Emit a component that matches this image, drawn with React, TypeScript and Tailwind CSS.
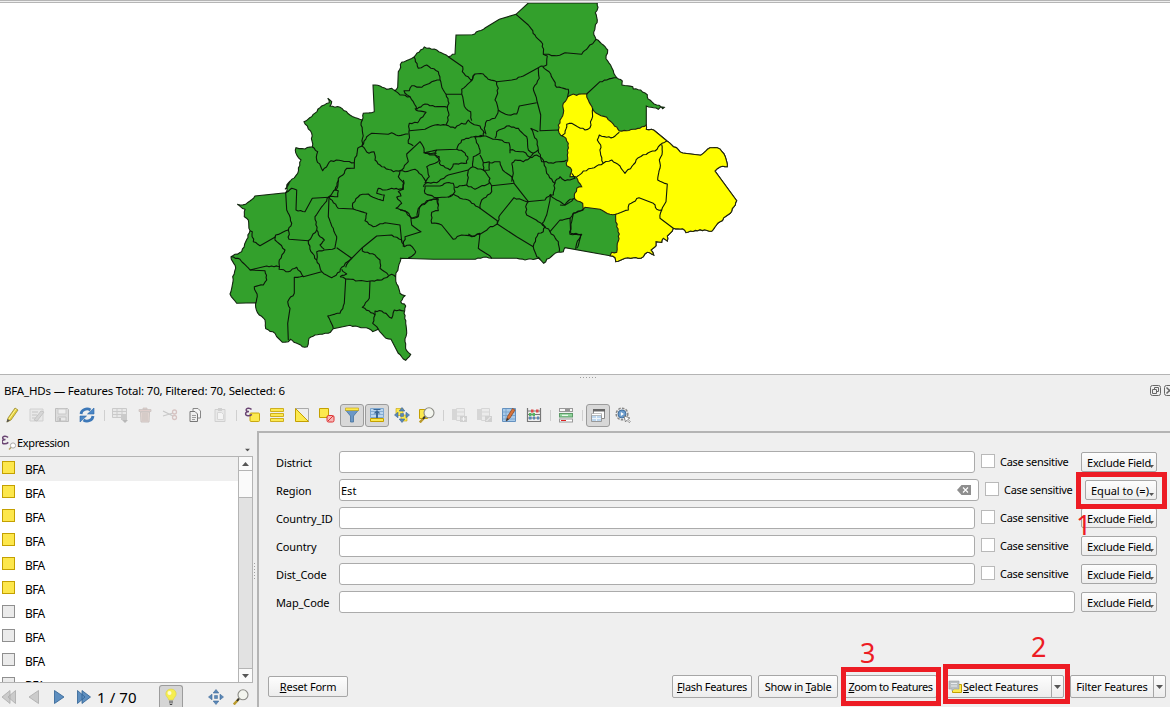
import React from "react";

type Seg = [number, number, string];
type Pt = [number, number];

function points(segs: Seg[]): Pt[] {
  const out: Pt[] = [];
  for (const [ox, oy, s] of segs)
    for (const p of s.trim().split(/\s+/)) {
      const [x, y] = p.split(",").map(Number);
      out.push([ox + x / 3, oy + y / 3]);
    }
  return out;
}

/* Gives short border segments a natural, slightly irregular course. */
function border(segs: Seg[], closed = false): string {
  const p = points(segs);
  if (closed) p.push(p[0]);
  let d = `M${p[0][0].toFixed(1)} ${p[0][1].toFixed(1)}`;
  for (let i = 1; i < p.length; i++) {
    const [a, b] = p[i - 1];
    const [x, y] = p[i];
    const len = Math.hypot(x - a, y - b);
    if (len > 4 && len < 15) {
      const n = Math.round(len / 2.6);
      for (let k = 1; k < n; k++) {
        const h = Math.sin((a + x) * 12.99 + (b + y) * 78.23 + k * 37.7) * 4375.5;
        const r = (h - Math.floor(h) - 0.5) * 1.5;
        const mx = a + ((x - a) * k) / n - ((y - b) / len) * r;
        const my = b + ((y - b) * k) / n + ((x - a) / len) * r;
        d += `L${mx.toFixed(1)} ${my.toFixed(1)}`;
      }
    }
    d += `L${x.toFixed(1)} ${y.toFixed(1)}`;
  }
  return closed ? d + "Z" : d;
}

const COUNTRY: Seg[] = [
  [440, 0, "265,9 472,9 474,22 466,38 472,60 461,96 468,118 490,135 503,150 498,176 512,196 520,212 530,233 547,243 546,255 578,260 580,267 602,270 622,284 624,297 650,315 663,320 673,322 668,326 663,320 655,328 619,318 619,388 642,391 681,423 715,449"],
  [560, 80, "368,219 422,226 450,203 472,203 486,215 496,230 502,260 480,261 465,273 530,362 522,380 511,400 480,425 455,454 420,449 378,458 368,446 340,445 330,460 322,468 322,483 310,475 305,487 288,485 288,497 273,510 281,525 262,517 243,535 220,533 195,535 167,545 165,533 150,527 15,503"],
  [400, 100, "495,443 490,455 475,456 440,478 431,490 420,478 415,475 375,480 350,475 275,475 250,472 218,478 100,478 0,475"],
  [225, 180, "528,236 520,262 512,288 515,312 525,340 540,347 527,365 542,378 537,400 542,430 545,460 540,485 545,512 557,523 542,541 520,520 498,478 483,475 460,448 443,455 432,446 400,440 375,436 325,446 310,460 292,463 270,465 252,475 247,500 232,500 207,487 197,478 190,485 172,487 155,470 150,460 122,446 120,420 103,405 92,382 92,368 35,370 15,342 22,315 23,290 32,265 18,230 50,215 62,185 75,152 70,120 58,110 60,88 37,73 62,73 90,48 182,38 190,15 195,3"],
  [225, 0, "180,568 195,545 218,520 228,480 212,458 213,443 240,447 262,440 260,400 237,365 260,350 290,318 313,308 308,295 320,305 315,318 345,322 375,345 412,360 415,340 448,335 444,255 465,258 485,268 500,265 510,272 518,262 520,215 530,187 567,171 598,141 635,150 670,170 690,162 693,105 742,104 780,84"],
  [440, 0, "178,58 228,43"],
];

const EAST: Seg[] = [
  [440, 0, "383,290 400,282 410,286 425,282 440,282 445,300 458,328 475,343 500,352 520,372 538,393 560,392 580,388 600,385 619,375 619,388 642,391 681,423 715,449"],
  [560, 80, "368,219 422,226 450,203 472,203 486,215 496,230 502,260 480,261 465,273 530,362 522,380 511,400 480,425 455,454 420,449 378,458 368,446 340,445 330,460 322,468 322,483 310,475 305,487 288,485 288,497 273,510 281,525 262,517 243,535 220,533 195,535 167,545 165,533 150,527 155,517 170,517 172,490 178,462 170,440 167,403 150,403 120,388 75,382 70,388 68,370 45,358 43,350 50,325 65,320 48,290 30,290 35,270 20,257 22,225 25,190 18,175 2,166"],
  [440, 0, "357,398 355,375 370,340 370,310"],
];

const LINES: Seg[] = [
  [225, 0, "412,360 408,375 413,400 411,438 425,410 440,400 490,403 500,398 520,407 550,402"],
  [225, 0, "262,440 278,455 275,480 293,512 318,482 350,482 388,488 398,445 411,438"],
  [225, 0, "388,488 388,505 365,505 358,520 340,535 330,570 340,572 338,590 312,590"],
  [225, 0, "411,438 432,460 447,455 450,480 470,500 505,515 530,510 550,485 545,462 585,425 595,440 600,460 635,460"],
  [225, 0, "567,171 580,205 605,195 640,215 645,238 655,270 663,283 672,310 667,322 672,345 663,375"],
  [225, 0, "645,240 620,245 590,262 560,257 553,272 537,272 540,280 555,290 525,285 508,270"],
  [225, 0, "555,290 565,305 575,328 600,312 630,320 667,322"],
  [225, 0, "570,325 580,333 603,337 578,368 553,370 553,388 550,430 565,437"],
  [225, 0, "553,392 600,388 630,375 663,375 690,385 710,370 722,372 730,360 740,370 765,378 778,400"],
  [225, 0, "670,170 713,200 712,215 740,242 710,268 710,283 663,283"],
  [225, 0, "740,242 750,222"],
  [225, 0, "710,283 722,325 737,335 740,362"],
  [225, 0, "525,512 540,515 570,508 590,525 603,550 595,560"],
  [225, 0, "525,512 520,530 537,550 532,568 535,568"],
  [440, 0, "228,43 265,75 285,105 308,132 310,163 322,168 320,195 295,203 250,228 215,240 170,245 145,238 130,222 105,222 92,242"],
  [440, 0, "310,163 350,167 375,158 425,163 440,148 468,118"],
  [440, 0, "440,282 480,245 500,240 530,233"],
  [440, 0, "308,200 332,222 350,262 385,268 383,292"],
  [440, 0, "295,203 298,235 280,265 290,300 302,345 300,392 357,390"],
  [440, 0, "170,245 175,265 165,300 175,330 205,345 230,342 238,318 290,308"],
  [440, 0, "175,330 165,355 140,362 133,385 138,403"],
  [560, 80, "98,85 95,118 90,143 75,150 35,130 20,133 15,160 5,168"],
  [560, 80, "178,157 160,172 140,172 118,165 112,180 122,195 122,225 130,250"],
  [560, 80, "50,290 70,273 95,265 130,250 155,240 180,258 195,280 215,260 235,233 265,218 285,213 300,195 320,183"],
  [560, 80, "305,193 307,215 298,240 300,265 293,300 322,312 318,365 305,390"],
  [560, 80, "167,403 205,390 207,373 237,353 280,370 290,388 305,390 300,415 340,445"],
  [560, 80, "70,388 40,400 35,425 30,463 62,465 50,490 47,508"],
  [560, 80, "0,375 15,375 30,358 45,355"],
  [225, 180, "182,38 185,90 193,105 200,130 190,150 192,178 250,182 275,150 270,110 295,75 312,50"],
  [225, 180, "182,38 200,25 215,30 213,90 240,95 262,55 312,52"],
  [225, 180, "340,0 338,20 312,50 340,85 385,87 383,70 405,45 430,42 452,55 475,62 478,45 455,40 460,25 480,30 500,25 535,28"],
  [225, 180, "535,0 535,28 520,35 528,48 515,52"],
  [225, 180, "385,87 425,100 420,122 445,140 480,128 525,135 530,185"],
  [225, 180, "312,52 310,110 325,145 335,170 330,205 298,210 275,215 275,240"],
  [225, 180, "250,182 258,215 275,240 290,275"],
  [225, 180, "275,150 285,170 298,180 285,195 298,208"],
  [225, 180, "290,275 235,290 215,262 190,275 162,268 163,240 180,210 150,180 152,165 190,150"],
  [225, 180, "152,170 105,197 85,185 82,155 75,152"],
  [225, 180, "18,230 45,238 75,270 125,258 162,260"],
  [225, 180, "75,270 120,272 125,300 115,315 88,320 97,350 92,370"],
  [225, 180, "235,288 208,292 208,340 188,365 195,385 188,430 190,480"],
  [225, 180, "290,275 320,293 345,275 350,262 380,235 335,203"],
  [225, 180, "345,290 365,282 350,268"],
  [225, 180, "345,290 362,297 400,302 435,303 470,300 500,283 512,290"],
  [225, 180, "362,297 358,370 345,400 308,408 325,446"],
  [225, 180, "435,303 433,355 412,382 450,405 443,430 460,448"],
  [225, 180, "450,405 450,393 470,393 500,415 508,390 537,393"],
  [225, 180, "362,262 375,240 412,203 412,213 450,225 465,240 465,265 490,285"],
  [225, 180, "412,203 455,168 500,165 530,180 538,200 555,195 572,215 565,225 550,233"],
  [225, 180, "515,50 530,70 513,85 540,92 558,115 560,135 588,155 540,170 535,200"],
  [225, 180, "558,115 577,112 580,85 605,62 640,57 640,92 620,97 620,130 650,135 685,178 710,165 740,170 765,160 760,205 795,228 800,235"],
  [400, 100, "70,158 110,150 170,148 185,120 220,110 250,108 225,112 235,135 240,160 220,170 218,200"],
  [400, 100, "250,108 253,95"],
  [400, 100, "110,150 105,165 118,170 118,190 150,210 160,192 200,190 203,170 190,155 170,148"],
  [400, 100, "75,160 105,165 118,180 105,190 80,200 88,230 75,248 110,248 145,225 205,210"],
  [400, 100, "75,258 120,258 140,248 160,250 165,275 150,290 110,293 75,280 75,258"],
  [400, 100, "205,210 203,240 200,255 225,268 240,260 268,250 270,235 250,210 218,200 205,210"],
  [400, 100, "250,188 268,185 268,210 250,210 250,188 240,165"],
  [400, 100, "268,188 300,185 308,210 335,230 342,250 275,257 268,245"],
  [400, 100, "165,262 200,255"],
  [400, 100, "145,292 160,283 180,295 205,300 240,325 292,362 292,372"],
  [400, 100, "240,325 245,300 275,275 275,257"],
  [400, 100, "240,403 265,385 292,372 300,345 342,293 380,305 435,300 452,282"],
  [400, 100, "240,403 215,408 205,402"],
  [400, 100, "342,250 385,305"],
  [400, 100, "292,372 350,410 400,440"],
  [400, 100, "400,440 415,400 430,395 435,380 415,365 380,345 377,320 385,305"],
  [400, 100, "400,440 410,470 420,478"],
  [400, 100, "427,370 440,345 450,300 452,285"],
  [400, 100, "427,370 450,395 475,425 478,455"],
  [400, 100, "450,395 480,360 510,355 512,400 545,403 530,445"],
  [400, 100, "335,190 345,180 370,185 410,165 430,180 440,220 465,250 460,285 452,285"],
  [400, 100, "335,190 340,220 335,245"],
  [400, 100, "285,115 290,95 320,78 355,85 380,110 385,150 400,160 390,172 370,155 330,150 327,128 285,118 250,108"],
  [400, 100, "400,160 415,150 425,185 460,190 500,180"],
  [400, 100, "330,150 330,160"],
  [400, 100, "392,85 400,100 412,125 415,150"],
  [400, 100, "392,85 415,95"],
  [400, 100, "465,250 470,238 480,230 495,242 510,240 525,235 515,220"],
  [400, 100, "452,285 470,300 495,315 520,297"],
  [400, 100, "510,355 520,340 550,330"],
  [400, 100, "0,330 20,335 35,355 55,350 60,320 90,300 115,293"],
  [400, 100, "110,293 115,315"],
];

function CountryMap() {
  return (
    <svg width="1170" height="371" viewBox="0 3 1170 371" className="block">
      <path d={border(COUNTRY, true)} fill="#33a02c" stroke="#12250f" strokeWidth="1.1" />
      <path d={border(EAST, true)} fill="#ffff00" stroke="#232310" strokeWidth="1.1" />
      <g fill="none" stroke="#0c160a" strokeWidth="1.1" strokeLinejoin="round">
        {LINES.map((l, i) => (
          <path key={i} d={border([l])} />
        ))}
      </g>
    </svg>
  );
}

function Svg({ children, faded }: { children: React.ReactNode; faded?: boolean }) {
  return (
    <svg width="16" height="16" viewBox="0 0 16 16" className={faded ? "opacity-35 grayscale" : ""}>
      {children}
    </svg>
  );
}

const Y = "#fce94f";
const YS = "#c4a000";
const BL = "#5b88b8";

const Pencil = () => (
  <Svg>
    <path d="M3 15l1-4 7-10 3 2-7 10z" fill="#e3cf3a" stroke="#9a8b35" strokeWidth=".8" />
    <path d="M5 12l7-10" stroke="#fff6a0" />
    <path d="M2.5 15.5l1-3.5 2.500 1.500z" fill="#555" />
  </Svg>
);
const MultiEdit = () => (
  <Svg faded>
    <path d="M1 2h13v12H1z" fill="#ddd" stroke="#999" />
    <path d="M3 5h6M3 8h5M3 11h4" stroke="#777" />
    <path d="M5 13l7-9 3 1-7 9z" fill="#aaa" stroke="#777" />
  </Svg>
);
const Save = () => (
  <Svg faded>
    <path d="M1.500 1.500h12l1 1v12h-13z" fill="#bbb" stroke="#666" />
    <path d="M4 2h8v5H4z" fill="#eee" stroke="#888" />
    <path d="M4 10h8v4H4z" fill="#ddd" stroke="#777" />
    <path d="M5 11h2v3H5z" fill="#666" />
  </Svg>
);
const Reload = () => (
  <Svg>
    <path d="M2 7a6 5.500 0 0 1 9.500-4" fill="none" stroke="#3d78b8" strokeWidth="2.800" />
    <path d="M15 1v6H8.500z" fill="#4a86c6" stroke="#2c66a5" strokeWidth=".6" />
    <path d="M14 9a6 5.500 0 0 1-9.500 4" fill="none" stroke="#3d78b8" strokeWidth="2.800" />
    <path d="M1 15V9h6.500z" fill="#4a86c6" stroke="#2c66a5" strokeWidth=".6" />
  </Svg>
);
const AddRow = () => (
  <Svg faded>
    <path d="M.5 1.500h14v9H.5zM.5 4.500h14M.5 7.500h14M5 1.500v9M10 1.500v9" fill="#ddd" stroke="#888" />
    <path d="M9 8h6v5h-6z" fill="#888" />
    <path d="M10 13h6l-3 3z" fill="#555" />
  </Svg>
);
const Trash = () => (
  <svg width="16" height="16" viewBox="0 0 16 16" className="opacity-45">
    <path d="M3.500 5h9l-.5 10H4z" fill="#d9bcb4" stroke="#a08f8a" />
    <path d="M2 2.500h12v2H2zM6 1h4v1.500H6z" fill="#cfaaa2" stroke="#a08f8a" strokeWidth=".8" />
    <path d="M6 6v8M8 6v8M10 6v8" stroke="#9a8782" />
  </svg>
);
const Cut = () => (
  <svg width="16" height="16" viewBox="0 0 16 16" className="opacity-45">
    <path d="M1 4l10 5M1 9l10-3" stroke="#999" strokeWidth="1.300" />
    <circle cx="12.500" cy="5" r="2" fill="none" stroke="#b9908c" strokeWidth="1.300" />
    <circle cx="12.500" cy="10.500" r="2" fill="none" stroke="#b9908c" strokeWidth="1.300" />
  </svg>
);
const Copy = () => (
  <Svg>
    <path d="M6 1.500h5l2.500 2.500v7H6z" fill="#f4f4f4" stroke="#888" />
    <path d="M3 4.500h5L10.500 7v7.500H3z" fill="#eee" stroke="#777" />
    <path d="M5 8.500h4M5 10.500h4M5 12.500h3" stroke="#888" strokeWidth=".8" />
  </Svg>
);
const Paste = () => (
  <Svg faded>
    <path d="M3 2.500h10v12H3z" fill="#ddd" stroke="#999" />
    <path d="M6 1h4v3H6z" fill="#999" />
    <path d="M5.500 5.500h4l2 2v5h-6z" fill="#fff" stroke="#aaa" />
  </Svg>
);
const Epsilon = () => (
  <path d="M7.500 2.500C6 .5 2 .8 2.200 3c.1 1.300 1.400 1.600 2.800 1.600C3 4.600 1.500 5.400 1.600 7c.2 2.300 4.200 2.400 6.200.4" fill="none" stroke="#6a4573" strokeWidth="1.500" />
);
const SelectExpr = () => (
  <Svg>
    <rect x="6" y="6" width="9.500" height="8.500" rx="1" fill={Y} stroke={YS} strokeWidth=".9" />
    <Epsilon />
  </Svg>
);
const SelectAll = () => (
  <Svg>
    <g fill={Y} stroke={YS} strokeWidth=".8">
      <path d="M1.500 1.500h13v3h-13zM1.500 6.500h13v3h-13zM1.500 11.500h13v3h-13z" />
    </g>
  </Svg>
);
const Invert = () => (
  <Svg>
    <path d="M1.500 1.500h13v13z" fill="#eee" stroke="#aaa" />
    <path d="M1.500 1.500v13h13z" fill={Y} stroke={YS} />
  </Svg>
);
const Deselect = () => (
  <Svg>
    <path d="M.5 1.500h9v9h-9z" fill={Y} stroke={YS} />
    <rect x="8" y="8.500" width="7" height="6.500" rx="1.500" fill="#f6b5b5" stroke="#d33" />
    <path d="M9 14l5-5" stroke="#d33" />
  </Svg>
);
const Filter = () => (
  <Svg>
    <path d="M1.500 3l5 6v6h3V9l5-6z" fill="#6b97c5" stroke="#45729f" strokeWidth=".8" />
    <path d="M1.500 1h13v2.500h-13z" fill={Y} stroke={YS} strokeWidth=".6" />
  </Svg>
);
const MoveTop = () => (
  <Svg>
    <path d="M1.500 1.500h13v9h-13z" fill="#bcd6ee" stroke="#7ea7cf" />
    <path d="M2 4.500h12M2 7.500h12" stroke="#86aed4" />
    <path d="M1.500 11.500h13v3h-13z" fill={Y} stroke={YS} />
    <path d="M7 11V6.500H4.500L8 3l3.500 3.500H9V11z" fill="#3a6796" />
    <path d="M4.500 2.500h7" stroke="#3a6796" />
  </Svg>
);
const Arrows = ({ yellow }: { yellow?: boolean }) => (
  <Svg>
    {yellow && <path d="M2 1.500h7v7H2zM7 8h6v6H7z" fill={Y} stroke={YS} strokeWidth=".6" />}
    <path d="M8 .5l2.800 3.500H5.200zM8 15.500L5.200 12h5.600zM.5 8L4 5.200v5.600zM15.500 8L12 10.800V5.200z" fill={BL} stroke="#3c6a99" strokeWidth=".6" />
    <path d="M6.500 6.500h3v3h-3z" fill={BL} stroke="#3c6a99" strokeWidth=".5" />
  </Svg>
);
const Magnifier = ({ yellow }: { yellow?: boolean }) => (
  <Svg>
    {yellow && <path d="M.5 2.500h8v9h-8z" fill={Y} stroke={YS} />}
    <path d="M.8 15.500l5-5.500" stroke="#b99a2c" strokeWidth="2.400" />
    <path d="M4 12l2-2.500" stroke="#333" strokeWidth="2" />
    <circle cx="10" cy="5.800" r="5" fill="#f3f5ee" stroke="#8b8b85" strokeWidth="1.100" />
  </Svg>
);
const NewField = ({ del }: { del?: boolean }) => (
  <Svg faded>
    <path d="M1 2h4v11H1z" fill="#aaa" />
    <path d="M5.500 1.500h8v12h-8zM5.500 5h8M5.500 9h8" fill="#e4e4e4" stroke="#aaa" />
    <rect x="9" y="9" width="7" height="6" fill="#999" />
    {del ? <path d="M10.500 14l4-4" stroke="#fff" /> : <path d="M12.500 10v4M10.500 12h4" stroke="#fff" />}
  </Svg>
);
const EditTable = () => (
  <Svg>
    <path d="M1.500 1.500h13v13h-13z" fill="#a9cbea" stroke="#6592c0" />
    <path d="M2 5h12M2 8.500h12M2 12h12M5 2v12" stroke="#7ba5cf" />
    <path d="M5.500 13.500l1-4 5-8 2.500 1.500-5 8z" fill="#d8743a" stroke="#8b4823" strokeWidth=".8" />
    <path d="M5 14.500l1-3.500 2 1.200z" fill="#333" />
  </Svg>
);
const Abacus = () => (
  <Svg>
    <path d="M1.500 1v14M14.500 1v14M1 14.500h14M1 4h14M1 7.500h14M1 11h14" stroke="#777" strokeWidth="1.200" />
    <path d="M5 2.500h2.500v3H5zM10 2.500h2.500v3H10z" fill="#dc4a4a" />
    <path d="M3 6h2.500v3H3zM6.500 6H9v3H6.500z" fill="#54b560" />
    <path d="M3 9.500h2.500v3H3zM7 9.500h2v3H7zM11 9.500h2v3h-2z" fill="#5b88b8" />
  </Svg>
);
const CondFormat = () => (
  <Svg>
    <rect x="1.500" y="1.500" width="13" height="3" fill="#f7f7f7" stroke="#999" />
    <rect x="1.500" y="6.500" width="13" height="3.500" fill="#8fd39a" stroke="#5d9a68" />
    <rect x="1.500" y="12" width="13" height="3" fill="#fff" stroke="#999" />
    <path d="M7 3h5" stroke="#333" />
    <path d="M4 8.300h6" stroke="#fff" />
    <path d="M3 13.500h5" stroke="#d22" />
  </Svg>
);
const Dock = () => (
  <Svg>
    <path d="M3.500 2.500h11v9h-11z" fill="#fff" stroke="#888" />
    <path d="M3 2h12v2.500H3z" fill="#666" />
    <path d="M1.500 7.500h10v7h-10z" fill="#bcd6ee" stroke="#999" />
    <path d="M1.500 6.500h10v2h-10z" fill="#fff" stroke="#999" strokeWidth=".6" />
    <path d="M2 11.500h9M6.500 9v5" stroke="#eef5fb" />
  </Svg>
);
const Actions = () => (
  <Svg>
    <circle cx="7" cy="7" r="5.800" fill="#e8e8e8" stroke="#888" strokeWidth="1.500" strokeDasharray="2.500 1.300" />
    <circle cx="7" cy="7" r="4" fill="#6b9ccc" stroke="#44719f" />
    <path d="M5.800 5l3.200 2-3.200 2z" fill="#fff" />
    <path d="M9 9l6 2-2.200 1.200 2.500 2.500-1 1-2.500-2.500L10.500 15z" fill="#fff" stroke="#777" strokeWidth=".8" />
  </Svg>
);

function Tool({ children, on }: { children: React.ReactNode; on?: boolean }) {
  return (
    <div className={on ? "ml-px flex h-[23px] w-6 items-center justify-center rounded-[3px] border border-[#9c9c9c] bg-[#d8d8d8]" : "flex h-[23px] w-[25px] items-center justify-start pl-1"}>
      {children}
    </div>
  );
}
const Sep = ({ wide }: { wide?: boolean }) => (
  <div className={wide ? "flex w-2 justify-center" : "flex w-[7px] justify-center"}>
    <div className="h-[11px] w-px bg-[#cfcfcf]" />
  </div>
);

const Tri = ({ className }: { className?: string }) => (
  <svg width="7" height="4" viewBox="0 0 7 4" className={className}>
    <path d="M0 0h7L3.500 4z" fill="#555" />
  </svg>
);

const btn = "flex shrink-0 items-center rounded-[2px] border border-[#a6a6a6] bg-linear-to-b from-[#fdfdfd] to-[#ededed] whitespace-nowrap";

function FieldRow({ name, value, equal, last }: { name: string; value?: string; equal?: boolean; last?: boolean }) {
  return (
    <div className="flex h-[22px] items-center">
      <span className="w-[63px] shrink-0 pt-px tracking-[-0.12px]">{name}</span>
      <div className="mr-1.5 flex h-[22px] flex-1 items-center justify-between rounded-[3px] border border-[#ababab] bg-white pl-px pr-[7px]">
        <span>{value}</span>
        {value && (
          <svg width="14" height="10" viewBox="0 0 14 10">
            <path d="M4.500 0H14v10H4.500L0 5z" fill="#8e8e8e" />
            <path d="M6 2.500l5 5M11 2.500l-5 5" stroke="#fff" strokeWidth="1.100" />
          </svg>
        )}
      </div>
      {!last && (
        <>
          <div className="mb-0.5 size-3.5 shrink-0 border border-[#b9b9b9] bg-white" />
          <span className={equal ? "w-[86px] shrink-0 whitespace-nowrap pb-0.5 pl-[5px] tracking-[-0.28px]" : "w-[86px] shrink-0 whitespace-nowrap pb-0.5 pl-[5px] tracking-[-0.28px]"}>Case sensitive</span>
        </>
      )}
      <div className={equal ? btn + " relative h-5 w-[72px] pl-[5px]" : btn + " relative h-5 w-[76px] pl-[5px] tracking-[-0.22px]"}>
        {equal ? "Equal to (=)" : "Exclude Field"}
        <svg width="5" height="3" viewBox="0 0 5 3" className="absolute bottom-[3px] right-0.5">
          <path d="M0 0h5L2.500 3z" fill="#555" />
        </svg>
      </div>
    </div>
  );
}

const ROWS = [1, 1, 1, 1, 1, 1, 0, 0, 0, 0];

function FeatureList() {
  return (
    <div className="flex w-[257px] shrink-0 flex-col">
      <div className="flex h-[25px] items-center pl-0.5">
        <svg width="15" height="17" viewBox="0 0 15 17" className="shrink-0">
          <g transform="translate(-1.500 0)">
            <Epsilon />
          </g>
          <path d="M7 14.500l2.500-2.500" stroke="#b0a060" strokeWidth="1.500" />
          <circle cx="11" cy="10.500" r="2.600" fill="#fff" stroke="#aaa" />
        </svg>
        <span className="flex-1 pb-[3px] tracking-[-0.35px]">Expression</span>
        <Tri className="mr-[6px] mt-3 scale-75" />
      </div>
      <div className="flex h-[227px] w-[253px] border-y border-r border-[#b4b4b4] bg-white">
        <div className="flex-1 overflow-hidden">
          {ROWS.map((on, i) => (
            <div key={i} className={i === 0 ? "flex h-6 items-center bg-[#efefef] pl-0.5" : "flex h-6 items-center pl-0.5"}>
              <div className={on ? "mb-[3px] size-[13px] border border-[#c4a000] bg-[#fde74c]" : "mb-[3px] size-[13px] border border-[#8f8f8f] bg-[#ebebeb]"} />
              <span className="pl-2.5 text-[12px] tracking-[-0.6px]">BFA</span>
            </div>
          ))}
        </div>
        <div className="flex w-3.5 flex-col border-l border-[#b4b4b4] bg-[#e2e2e2]">
          <div className="flex h-3.5 items-center justify-center border-b border-[#b4b4b4] bg-[#fafafa]">
            <Tri className="rotate-180" />
          </div>
          <div className="h-[27px] border-b border-[#b4b4b4] bg-[#fafafa]" />
          <div className="flex-1" />
          <div className="flex h-3.5 items-center justify-center border-t border-[#b4b4b4] bg-[#fafafa]">
            <Tri />
          </div>
        </div>
      </div>
      <div className="flex h-[23px] items-center pt-1">
        <svg width="92" height="16" viewBox="0 0 92 16" className="shrink-0">
          <g fill="#cbcbcb" stroke="#ababab" strokeWidth=".8">
            <path d="M10 1.500v13L2 8zM15.500 1.500v13L8 8z" />
            <path d="M38.500 1.500v13L29 8z" />
          </g>
          <g fill="#5e8fc0" stroke="#2f6193" strokeWidth=".8">
            <path d="M54.500 1.500v13L64 8zM77.500 1.500v13L85 8zM82 1.500v13L90.500 8z" />
          </g>
        </svg>
        <span className="w-[67px] whitespace-nowrap pl-[5px] pt-0.5 text-[15px] tracking-[0.1px]">1 / 70</span>
        <div className="flex h-[23px] w-6 items-center justify-center rounded-t-[3px] border border-b-0 border-[#9c9c9c] bg-[#d5d5d5]">
          <svg width="14" height="18" viewBox="0 0 14 18">
            <path d="M7 1C3.500 1 1.800 3.500 1.800 6c0 2.500 2.500 3.700 3 6h4.400c.5-2.300 3-3.500 3-6C12.200 3.500 10.500 1 7 1z" fill="#f6ee4d" stroke="#d9cf50" strokeWidth=".6" />
            <circle cx="5.500" cy="5" r="2" fill="#fffccf" />
            <path d="M5 12.500h4v3H5z" fill="#8b8b8b" />
            <path d="M5.800 16h2.400v1H5.800z" fill="#444" />
          </svg>
        </div>
        <div className="ml-[25px]"><Arrows /></div>
        <div className="ml-[9px]"><Magnifier /></div>
      </div>
    </div>
  );
}

const U = ({ children }: { children: string }) => <span className="underline underline-offset-1">{children}</span>;

export default function App() {
  return (
    <div className="relative flex h-[707px] w-[1170px] flex-col overflow-hidden bg-[#efefef] font-['Noto_Sans','Open_Sans',sans-serif] text-[11px] leading-[15px] text-black">
      <div className="h-[3px] border-y border-[#b5b5b5] bg-[#efefef]" />
      <div className="h-[371px] bg-white">
        <CountryMap />
      </div>
      <div className="flex h-[26px] items-center border-t border-[#b4b4b4] pl-1 pt-[5px]">
        <span className="flex-1 text-[11.5px] tracking-[-0.18px]">BFA_HDs — Features Total: 70, Filtered: 70, Selected: 6</span>
        <svg width="20" height="12" viewBox="0 0 20 12" className="mt-0.5 shrink-0">
          <g fill="none" stroke="#666">
            <rect x=".5" y=".5" width="10" height="10" rx="2" />
            <path d="M4.500 4V2.500h4v4H7M2.500 4.500h4v4h-4z" />
            <rect x="14.500" y=".5" width="10" height="10" rx="2" />
            <path d="M16.500 2.500l6 6M16.500 8.500l6-6" strokeWidth="1.500" />
          </g>
        </svg>
      </div>
      <div className="flex h-[31px] items-center pb-px">
        <Tool><Pencil /></Tool>
        <Tool><MultiEdit /></Tool>
        <Tool><Save /></Tool>
        <Tool><Reload /></Tool>
        <Sep wide />
        <Tool><AddRow /></Tool>
        <Tool><Trash /></Tool>
        <Tool><Cut /></Tool>
        <Tool><Copy /></Tool>
        <Tool><Paste /></Tool>
        <Sep />
        <Tool><SelectExpr /></Tool>
        <Tool><SelectAll /></Tool>
        <Tool><Invert /></Tool>
        <Tool><Deselect /></Tool>
        <div className="-ml-px mr-px flex">
          <Tool on><Filter /></Tool>
          <Tool on><MoveTop /></Tool>
        </div>
        <Tool><Arrows yellow /></Tool>
        <Tool><Magnifier yellow /></Tool>
        <Sep />
        <Tool><NewField /></Tool>
        <Tool><NewField del /></Tool>
        <Tool><EditTable /></Tool>
        <Tool><Abacus /></Tool>
        <Sep />
        <Tool><CondFormat /></Tool>
        <Sep />
        <div className="-ml-px mr-px flex">
          <Tool on><Dock /></Tool>
        </div>
        <Tool><Actions /></Tool>
      </div>
      <div className="flex h-[276px]">
        <FeatureList />
        <div className="flex flex-1 flex-col border-l-2 border-t-2 border-[#b4b4b4]">
          <div className="flex flex-col gap-1.5 pl-[17px] pr-[13px] pt-[18px]">
            <FieldRow name="District" />
            <FieldRow name="Region" value="Est" equal />
            <FieldRow name="Country_ID" />
            <FieldRow name="Country" />
            <FieldRow name="Dist_Code" />
            <FieldRow name="Map_Code" last />
          </div>
          <div className="mt-auto flex h-[33px] items-start pl-[9px] pr-1">
            <div className={btn + " mt-0.5 h-[21px] w-20 justify-center tracking-[-0.2px]"}><span><U>R</U>eset Form</span></div>
            <div className="flex-1" />
            <div className={btn + " mt-px h-[23px] w-20 justify-center tracking-[-0.3px]"}><span><U>F</U>lash Features</span></div>
            <div className={btn + " ml-1.5 mt-px h-[23px] w-20 justify-center tracking-[-0.3px]"}><span>Show in <U>T</U>able</span></div>
            <div className={btn + " ml-1.5 mt-px h-[23px] w-[93px] justify-center tracking-[-0.42px]"}><span><U>Z</U>oom to Features</span></div>
            <div className={btn + " ml-2 mt-px h-[23px] w-[107px] rounded-r-none pl-0.5 tracking-[-0.2px]"}>
              <svg width="15" height="14" viewBox="0 0 15 14">
                <path d="M4.500 4.500h9v8h-9z" fill={Y} stroke={YS} />
                <path d="M1 1h10v8H6l-2 2V9H1z" fill="#b9bfc2" stroke="#9aa0a3" strokeWidth=".6" />
                <path d="M3 3.500h6M3 6h6" stroke="#e9ecee" />
              </svg>
              <span><U>S</U>elect Features</span>
            </div>
            <div className={btn + " -ml-px mt-px h-[23px] w-[13px] justify-center rounded-l-none"}><Tri /></div>
            <div className={btn + " ml-1.5 mt-px h-[23px] w-[84px] justify-center rounded-r-none tracking-[-0.15px]"}>Filter Features</div>
            <div className={btn + " -ml-px mt-px h-[23px] w-[13px] justify-center rounded-l-none"}><Tri /></div>
          </div>
        </div>
      </div>
      <div className="absolute left-[580px] top-[377px] flex gap-0.5">
        {[0, 1, 2, 3, 4, 5].map((i) => (
          <div key={i} className="size-px bg-[#a0a0a0]" />
        ))}
      </div>
      <div className="absolute left-[254px] top-[563px] flex flex-col gap-0.5">
        {[0, 1, 2, 3, 4, 5].map((i) => (
          <div key={i} className="size-px bg-[#a0a0a0]" />
        ))}
      </div>
      <div className="absolute left-[1076px] top-[472px] h-[37px] w-[91px] border-[5px] border-[#ed1c24]" />
      <div className="absolute left-[943px] top-[664px] h-10 w-[127px] border-[5px] border-[#ed1c24]" />
      <div className="absolute left-[841px] top-[667px] h-[39px] w-[100px] border-[5px] border-[#ed1c24]" />
      <div className="absolute left-[1076px] top-[511px] text-[27px] leading-7 text-[#ed1c24]">1</div>
      <div className="absolute left-[1031px] top-[633px] text-[27px] leading-7 text-[#ed1c24]">2</div>
      <div className="absolute left-[860px] top-[639px] text-[27px] leading-7 text-[#ed1c24]">3</div>
    </div>
  );
}
